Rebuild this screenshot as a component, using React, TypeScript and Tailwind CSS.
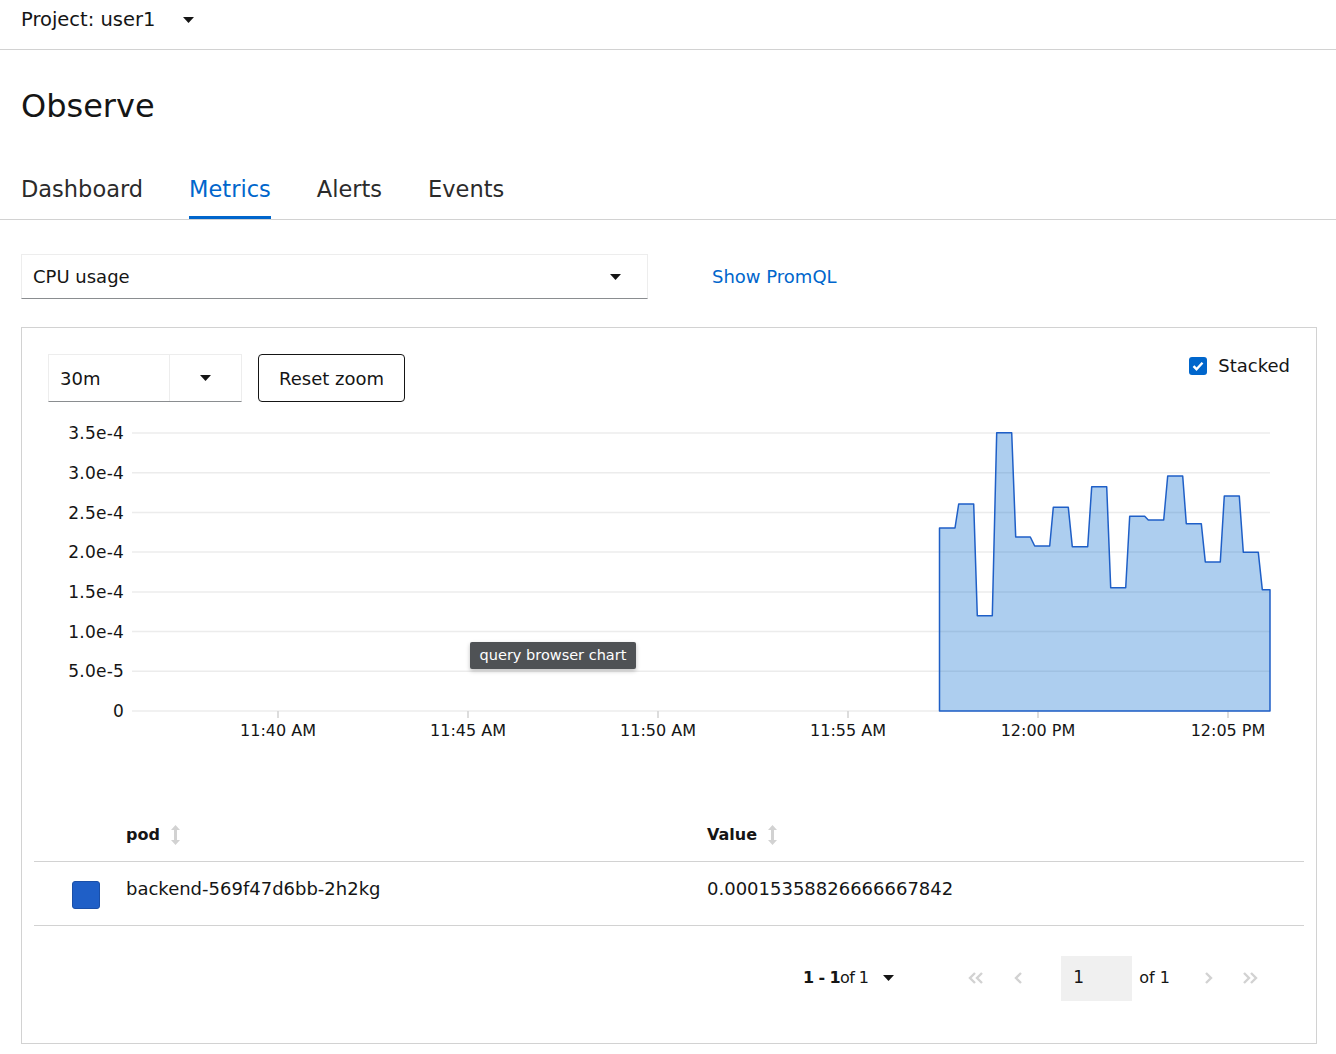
import React from "react";

const gridYs = [432, 471.7, 511.4, 551.1, 590.9, 630.6, 670.3, 710];
const yLabels = ["3.5e-4", "3.0e-4", "2.5e-4", "2.0e-4", "1.5e-4", "1.0e-4", "5.0e-5", "0"];
const xTicks = [
	{ x: 278, label: "11:40 AM" },
	{ x: 468, label: "11:45 AM" },
	{ x: 658, label: "11:50 AM" },
	{ x: 848, label: "11:55 AM" },
	{ x: 1038, label: "12:00 PM" },
	{ x: 1228, label: "12:05 PM" },
];

// page coordinates, shifted by the group transform
const series: [number, number][] = [
	[939.5, 710], [939.5, 527], [955, 527], [958.7, 503], [973.7, 503],
	[977.3, 614.7], [992.3, 614.7], [996.7, 431.7], [1011.7, 431.7],
	[1015.7, 536], [1030.3, 536], [1034.7, 545], [1049.7, 545],
	[1053.3, 506.3], [1068.3, 506.3], [1072.3, 545.7], [1087.7, 545.7],
	[1091.7, 485.7], [1106.7, 485.7], [1110.7, 586.7], [1125.7, 586.7],
	[1129.7, 515.3], [1144.7, 515.3], [1148.3, 519], [1163.7, 519],
	[1167.7, 475], [1182.7, 475], [1186.3, 522.7], [1201.3, 522.7],
	[1205.3, 561], [1220.3, 561], [1224.3, 495], [1239.3, 495],
	[1243.3, 551.3], [1258.3, 551.3], [1262.3, 588.7], [1270, 588.7],
	[1270, 710],
];
const areaPath = "M" + series.map(([x, y]) => `${x},${y}`).join(" L") + " Z";

function Caret({ className = "" }: { className?: string }) {
	return (
		<svg width="11" height="6" viewBox="0 0 11 6" className={className}>
			<path d="M0 0h11L5.5 6z" fill="#151515" />
		</svg>
	);
}

function SortIcon() {
	return (
		<svg width="9" height="20" viewBox="0 0 9 20" className="ml-[11px]">
			<path d="M4.5 0L9 5H6v10h3l-4.5 5L0 15h3V5H0z" fill="#d2d2d2" />
		</svg>
	);
}

function Angle({ dir, double }: { dir: "left" | "right"; double?: boolean }) {
	const single = dir === "left" ? "M7 2L2 7l5 5" : "M2 2l5 5-5 5";
	return (
		<svg width={double ? 17 : 9} height="14" viewBox={double ? "0 0 17 14" : "0 0 9 14"}>
			<path d={single} fill="none" stroke="#d2d2d2" strokeWidth="2.4" />
			{double && (
				<path
					d={single}
					transform="translate(7 0)"
					fill="none"
					stroke="#d2d2d2"
					strokeWidth="2.4"
				/>
			)}
		</svg>
	);
}

function Chart() {
	return (
		<div className="relative h-[360px]">
			<svg width="1296" height="360" className="block">
				<g transform="translate(-22 -410)" fontFamily="DejaVu Sans, sans-serif">
					{gridYs.map((y, i) => (
						<g key={y}>
							<line x1="132" x2="1270" y1={y} y2={y} stroke="#ececec" strokeWidth="1.5" />
							<text
								x="124"
								y={y}
								dy="0.36em"
								textAnchor="end"
								fontSize="17"
								letterSpacing="0.2"
								fill="#151515"
							>
								{yLabels[i]}
							</text>
						</g>
					))}
					{xTicks.map((t) => (
						<g key={t.label}>
							<line x1={t.x} x2={t.x} y1="710" y2="717" stroke="#d2d2d2" strokeWidth="1.5" />
							<text
								x={t.x}
								y="729"
								dy="0.36em"
								textAnchor="middle"
								fontSize="16"
								fill="#151515"
							>
								{t.label}
							</text>
						</g>
					))}
					<path
						d={areaPath}
						fill="#0066cc"
						fillOpacity="0.32"
						stroke="#1f5fc7"
						strokeWidth="1.5"
						strokeLinejoin="round"
					/>
				</g>
			</svg>
			<div className="absolute left-[448px] top-[231px] flex h-[27px] w-[166px] items-center justify-center rounded-[2px] bg-[#4f5255] text-[14.5px] text-white shadow-[0_2px_4px_rgba(0,0,0,0.25)]">
				query browser chart
			</div>
		</div>
	);
}

export default function App() {
	return (
		<div className="min-h-[1054px] bg-white font-['DejaVu_Sans',sans-serif] text-[#151515]">
			<header className="flex h-[50px] items-start border-b border-[#d2d2d2] pl-[21px] pt-[7px]">
				<span className="text-[19.5px] leading-[26px]">Project: user1</span>
				<Caret className="ml-[28px] mt-[10px]" />
			</header>

			<h1 className="mt-[36px] pl-[21px] text-[32px] leading-[40px]">Observe</h1>

			<nav className="flex border-b border-[#d2d2d2] pl-[21px]">
				{["Dashboard", "Metrics", "Alerts", "Events"].map((tab) => {
					const active = tab === "Metrics";
					return (
						<div
							key={tab}
							className={`mr-[46px] border-b-[3px] pb-[12px] pt-[48px] text-[22.5px] leading-[30px] ${
								active ? "border-[#0066cc] text-[#0066cc]" : "border-transparent text-[#2b2b2b]"
							}`}
						>
							{tab}
						</div>
					);
				})}
			</nav>

			<div className="pl-[21px] pr-[19px]">
				<div className="mt-[34px] flex items-center">
					<div className="flex h-[45px] w-[627px] items-center justify-between border border-[#ededed] border-b-[#8a8d90] pl-[11px] pr-[26px]">
						<span className="text-[18px]">CPU usage</span>
						<Caret />
					</div>
					<span className="ml-[64px] text-[18px] text-[#0066cc]">Show PromQL</span>
				</div>

				<section className="mt-[28px] border border-[#d2d2d2] pb-[13px]">
					<div className="flex items-start justify-between px-[26px] pt-[26px]">
						<div className="flex">
							<div className="flex h-[48px] w-[194px] border border-[#ededed] border-b-[#8a8d90]">
								<div className="flex w-[121px] items-center border-r border-[#ededed] pl-[11px] text-[18px]">
									30m
								</div>
								<div className="flex flex-1 items-center justify-center">
									<Caret />
								</div>
							</div>
							<button className="ml-[16px] h-[48px] w-[147px] rounded-[4px] border border-[#151515] text-[18px]">
								Reset zoom
							</button>
						</div>
						<label className="-mt-[2px] flex items-center">
							<span className="flex h-[18px] w-[18px] items-center justify-center rounded-[3px] bg-[#0066cc]">
								<svg width="12" height="10" viewBox="0 0 12 10">
									<path d="M1.5 5.2l3 3L10.5 1.8" fill="none" stroke="#fff" strokeWidth="2.4" />
								</svg>
							</span>
							<span className="ml-[11px] text-[18px]">Stacked</span>
						</label>
					</div>

					<div className="mt-[9px]">
						<Chart />
					</div>

					<div className="mx-[12px] mt-[30px]">
						<div className="flex h-[61px] items-end border-b border-[#d2d2d2] pb-[14px] text-[16px] font-bold">
							<div className="flex w-[673px] items-center pl-[92px]">
								pod
								<SortIcon />
							</div>
							<div className="flex items-center">
								Value
								<SortIcon />
							</div>
						</div>
						<div className="flex h-[64px] items-start border-b border-[#d2d2d2] pt-[16px] text-[18px] leading-[22px]">
							<div className="flex w-[673px] items-start">
								<span className="ml-[38px] mt-[3px] h-[28px] w-[28px] rounded-[3px] border border-[#1a4fa8] bg-[#1f5fc7]" />
								<span className="ml-[26px]">backend-569f47d6bb-2h2kg</span>
							</div>
							<span>0.00015358826666667842</span>
						</div>
					</div>

					<div className="flex h-[104px] items-center justify-end pr-[45px] text-[16px]">
						<span className="tracking-[-0.6px]">
							<b>1 - 1</b>of 1
						</span>
						<Caret className="ml-[15px]" />
						<span className="ml-[61px] flex w-[42px] justify-center">
							<Angle dir="left" double />
						</span>
						<span className="flex w-[42px] justify-center">
							<Angle dir="left" />
						</span>
						<div className="ml-[22px] flex h-[45px] w-[71px] items-center bg-[#f0f0f0] pl-[12px] text-[17px]">
							1
						</div>
						<span className="ml-[7px] text-[16px]">of 1</span>
						<span className="ml-[17px] flex w-[42px] justify-center">
							<Angle dir="right" />
						</span>
						<span className="flex w-[42px] justify-center">
							<Angle dir="right" double />
						</span>
					</div>
				</section>
			</div>
		</div>
	);
}
